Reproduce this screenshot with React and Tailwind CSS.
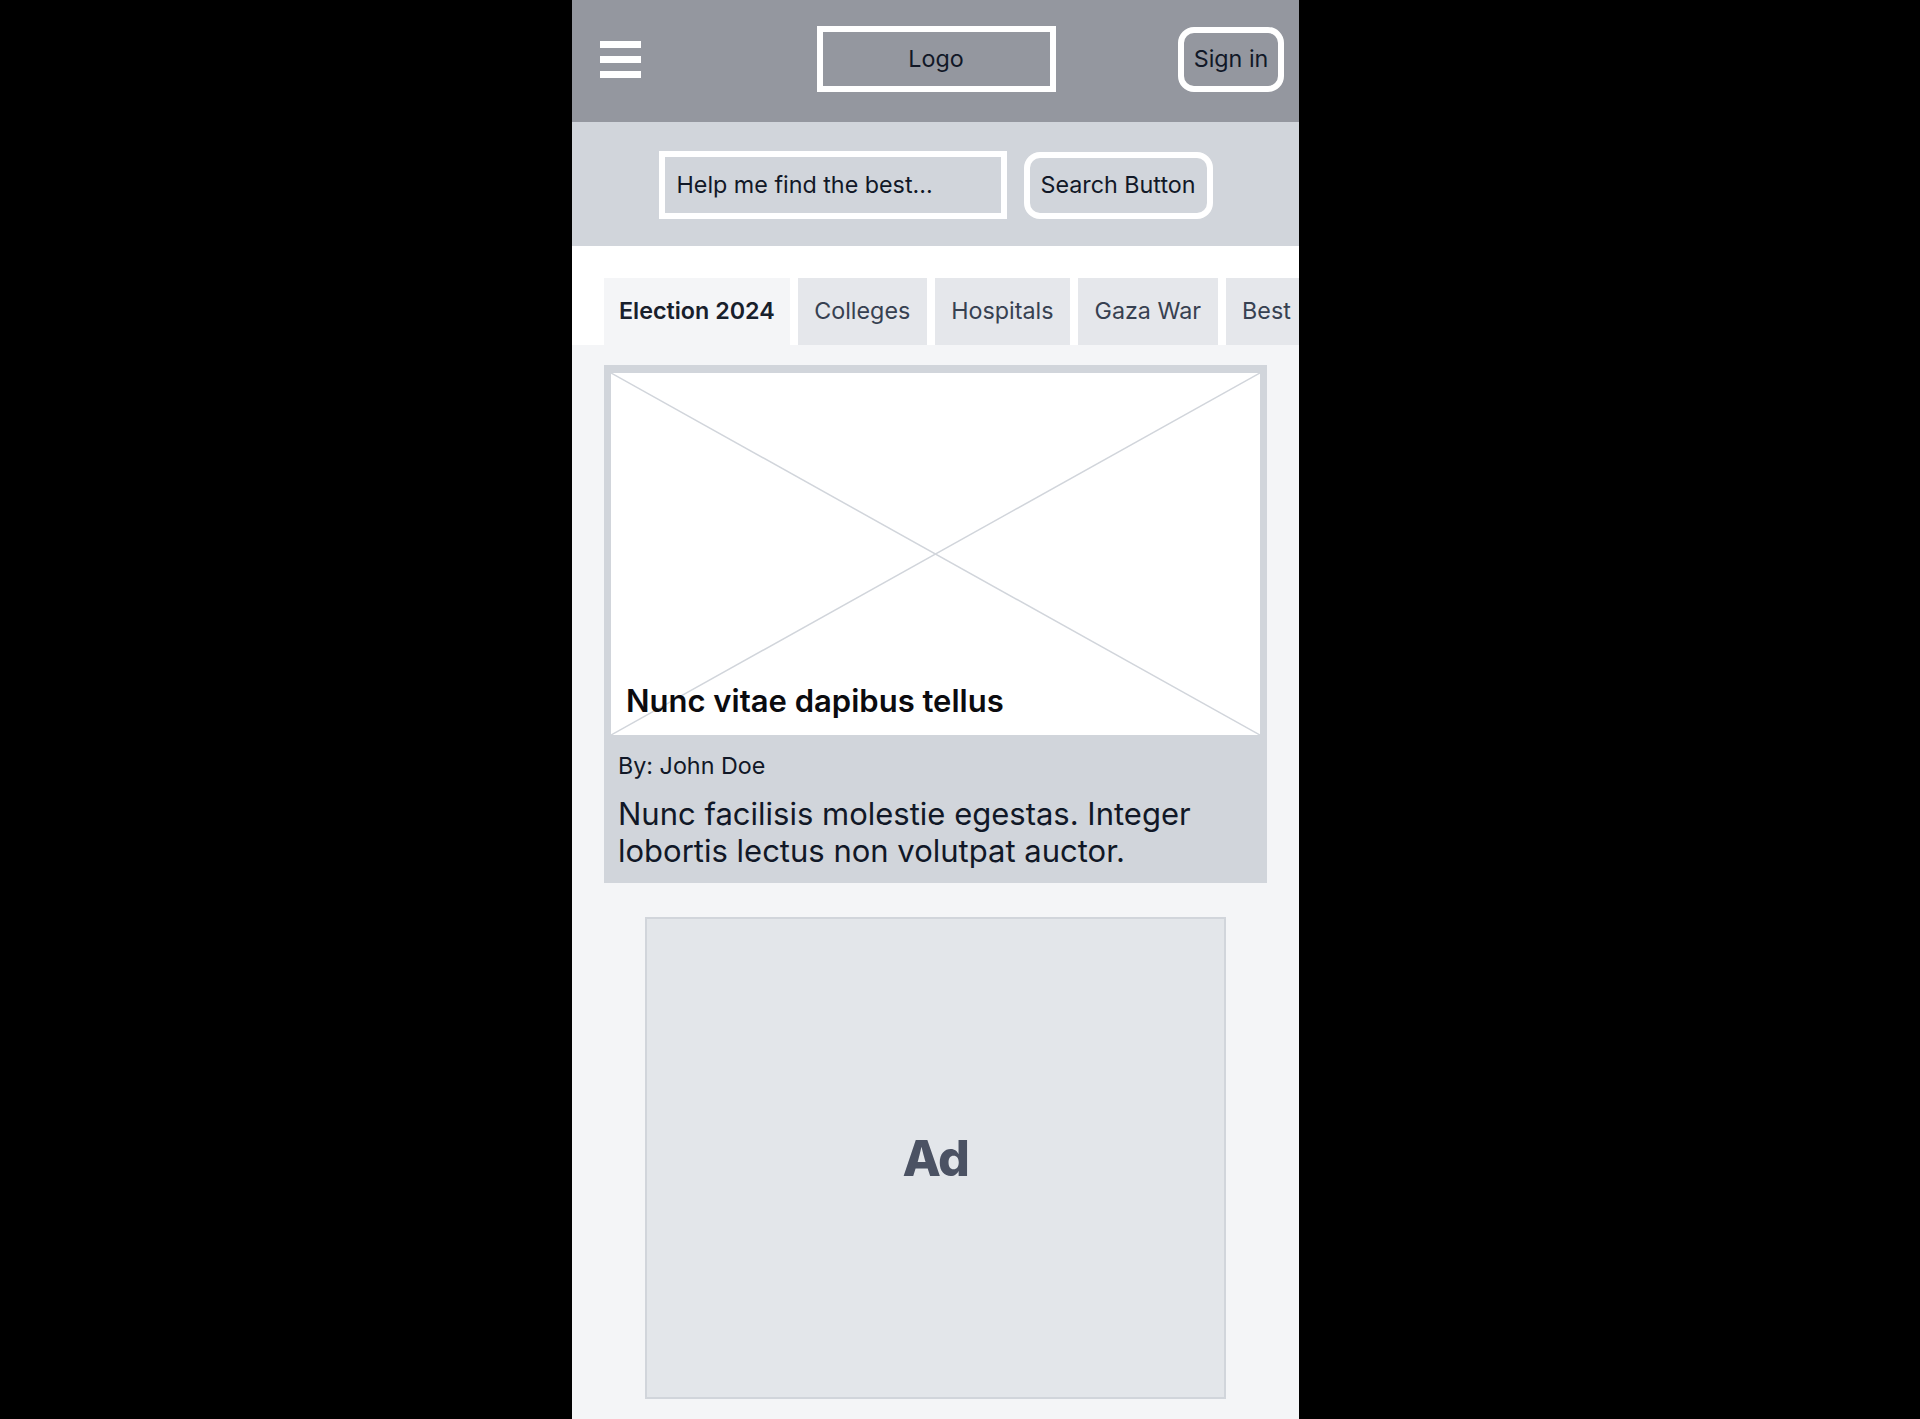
import React from 'react';

const tabs = ['Election 2024', 'Colleges', 'Hospitals', 'Gaza War', 'Best Medical Schools'];

function Hamburger() {
  return (
    <div className="flex flex-col gap-[8px] w-[41px]">
      <span className="block h-[7px] bg-white" />
      <span className="block h-[7px] bg-white" />
      <span className="block h-[7px] bg-white" />
    </div>
  );
}

export default function App() {
  return (
    <div className="min-h-screen bg-black" style={{ fontFamily: 'Inter, "Noto Sans", sans-serif' }}>
      <div className="ml-[572px] w-[727px] min-h-[1419px] bg-[#f4f5f7] overflow-hidden">
        {/* top bar */}
        <header className="h-[122px] bg-[#94979f] grid grid-cols-[1fr_auto_1fr] items-center pl-[28px] pr-[15px]">
          <div className="justify-self-start -mt-[3px]">
            <Hamburger />
          </div>
          <div className="w-[239px] h-[66px] border-[6px] border-white flex items-center justify-center text-[23.3px] text-[#111827] -mt-[4px] -ml-[12px]">
            Logo
          </div>
          <div className="justify-self-end w-[106px] h-[65px] rounded-[16px] border-[6px] border-white flex items-center justify-center text-[23.3px] text-[#111827] -mt-[4px]">
            Sign in
          </div>
        </header>

        {/* search */}
        <div className="h-[124px] bg-[#d1d5db] flex items-center justify-center gap-[17px] pt-[2px]">
          <div className="w-[348px] h-[68px] border-[6px] border-white flex items-center pl-[12px] text-[23.3px] text-[#111827]">
            Help me find the best...
          </div>
          <div className="w-[189px] h-[67px] rounded-[16px] border-[6px] border-white flex items-center justify-center text-[23.3px] text-[#111827] whitespace-nowrap">
            Search Button
          </div>
        </div>

        {/* tabs */}
        <div className="bg-white pt-[32px] pl-8 flex gap-[8px] overflow-hidden whitespace-nowrap">
          {tabs.map((t, i) => (
            <div
              key={t}
              className={
                i === 0
                  ? 'h-[67px] shrink-0 px-[15px] flex items-center bg-[#f4f5f7] text-[23.3px] font-semibold text-[#18202c]'
                  : 'h-[67px] shrink-0 px-[16.5px] flex items-center bg-[#e5e7eb] text-[23.3px] text-[#374151]'
              }
            >
              {t}
            </div>
          ))}
        </div>

        {/* content */}
        <main className="px-8 pt-[20px]">
          <article className="bg-[#d1d5db] pt-[8px] px-[7px] pb-[14px]">
            <div className="relative h-[362px] bg-white">
              <svg className="absolute inset-0 w-full h-full" viewBox="0 0 100 100" preserveAspectRatio="none">
                <line x1="0" y1="0" x2="100" y2="100" stroke="#d1d5db" strokeWidth="1.5" vectorEffect="non-scaling-stroke" />
                <line x1="100" y1="0" x2="0" y2="100" stroke="#d1d5db" strokeWidth="1.5" vectorEffect="non-scaling-stroke" />
              </svg>
              <h2 className="absolute left-[15px] bottom-[15px] text-[31px] leading-[38px] font-semibold text-[#0b0b0f]">
                Nunc vitae dapibus tellus
              </h2>
            </div>
            <div className="px-[7px] pt-[16px]">
              <p className="text-[23.3px] leading-[30px] text-[#111827]">By: John Doe</p>
              <p className="mt-[14px] text-[31px] leading-[37px] text-[#111827]">
                Nunc facilisis molestie egestas. Integer lobortis lectus non volutpat auctor.
              </p>
            </div>
          </article>

          <div className="mt-[34px] mx-auto w-[581px] h-[482px] border-2 border-[#d1d5db] bg-[#e3e6ea] flex items-center justify-center">
            <span className="text-[50px] font-extrabold text-[#4b5263] tracking-tight">Ad</span>
          </div>
        </main>
      </div>
    </div>
  );
}
